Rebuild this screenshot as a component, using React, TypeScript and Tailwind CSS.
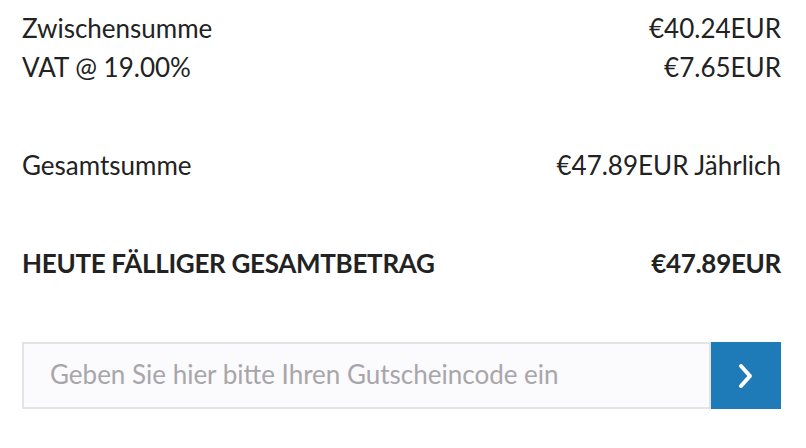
import { useState } from "react";

const font = { fontFamily: "Lato, 'Noto Sans', sans-serif" };

function Row({ label, value, bold }: { label: string; value: string; bold?: boolean }) {
  return (
    <div className={`flex justify-between text-[26px] leading-[39px] ${bold ? "font-bold tracking-[-0.3px]" : ""}`}>
      <span>{label}</span>
      <span>{value}</span>
    </div>
  );
}

export default function App() {
  const [code, setCode] = useState("");

  return (
    <div className="w-[806px] h-[448px] bg-white text-[#222] pl-[22px] pr-[25px] pt-[9px]" style={font}>
      {/* Totals */}
      <Row label="Zwischensumme" value="€40.24EUR" />
      <Row label="VAT @ 19.00%" value="€7.65EUR" />
      <div className="mt-[59px]">
        <Row label="Gesamtsumme" value="€47.89EUR Jährlich" />
      </div>
      <div className="mt-[59px]">
        <Row label="HEUTE FÄLLIGER GESAMTBETRAG" value="€47.89EUR" bold />
      </div>

      {/* Coupon */}
      <div className="mt-[59px] flex h-[67px]">
        <input
          value={code}
          onChange={(e) => setCode(e.target.value)}
          placeholder="Geben Sie hier bitte Ihren Gutscheincode ein"
          className="flex-1 min-w-0 bg-[#fbfafc] border-2 border-[#e4e2e7] pl-[26px] pr-4 pb-[2px] text-[26px] text-[#555] placeholder:text-[#a8a6aa] outline-none"
          style={font}
        />
        <button className="w-[70px] bg-[#1f7ab8] flex items-center justify-center">
          <svg width="18" height="26" viewBox="0 0 18 26" fill="none">
            <polyline points="4,3 13,13 4,23" stroke="white" strokeWidth="4" strokeLinecap="round" strokeLinejoin="round" />
          </svg>
        </button>
      </div>
    </div>
  );
}
